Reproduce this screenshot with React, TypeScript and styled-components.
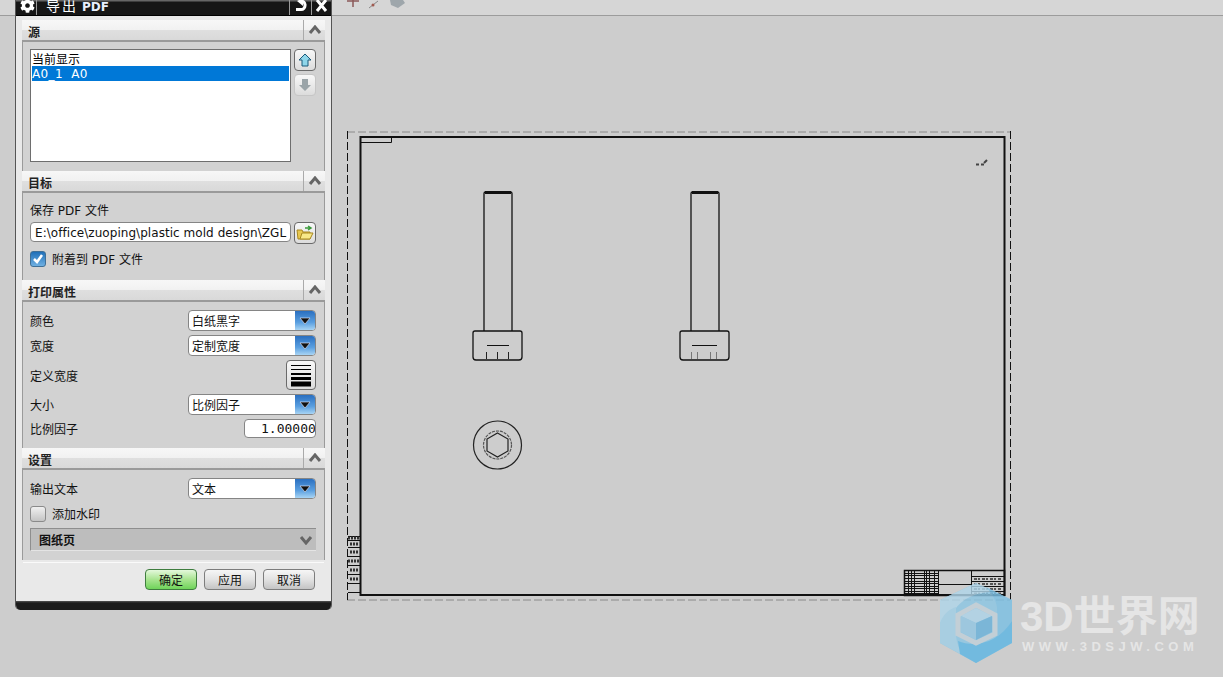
import React from 'react'
import styled, { createGlobalStyle } from 'styled-components'
import { FaCog } from 'react-icons/fa'

const GlobalStyle = createGlobalStyle`
  html, body {
    margin: 0;
    height: 100%;
    overflow: hidden;
    background: #cdcdcd;
  }
  * {
    box-sizing: border-box;
  }
`

const CJK = `"DejaVu Sans", "Noto Sans CJK SC", sans-serif`

const Page = styled.div`
  position: relative;
  width: 1223px;
  height: 677px;
  overflow: hidden;
  font-family: ${CJK};
  font-size: 12px;
  color: #111;
`

const Toolbar = styled.div`
  display: flex;
  align-items: flex-start;
  height: 16px;
  padding-left: 344px;
  background: #d6d6d6;
  border-bottom: 1px solid #9c9c9c;
`

const Canvas = styled.svg`
  display: block;
  width: 1223px;
  height: 661px;
`

const Dialog = styled.div`
  position: absolute;
  left: 15px;
  top: 0;
  width: 317px;
  height: 610px;
  display: flex;
  flex-direction: column;
  background: #e9e9e9;
  border-left: 1px solid #555;
  border-right: 1px solid #555;
  border-radius: 0 0 5px 5px;
  overflow: hidden;
`

const TitleBar = styled.div`
  display: flex;
  flex: none;
  align-items: stretch;
  height: 16px;
  background: linear-gradient(#666 0, #666 1px, #161616 2px);
  border-bottom: 1px solid #000;
  color: #fff;
`

const TitleCell = styled.div<{ $w: number }>`
  display: flex;
  flex: none;
  align-items: flex-start;
  justify-content: center;
  width: ${(p) => p.$w}px;
  border-left: 1px solid #9a9a9a;
  &:first-child {
    border-left: 0;
    border-right: 1px solid #9a9a9a;
    margin-left: 3px;
    width: 18px;
  }
`

const Gear = styled(FaCog)`
  margin-top: -2px;
`

const TitleText = styled.div`
  flex: 1;
  padding-left: 9px;
  font-size: 14px;
  line-height: 13px;
  height: 15px;
  letter-spacing: 2px;
  overflow: hidden;
  white-space: nowrap;
  span {
    font-size: 12px;
    font-weight: 700;
    letter-spacing: 0;
    color: #e8eefc;
    margin-left: 4px;
  }
`

const Sections = styled.div`
  flex: none;
  margin: 4px 6px 0;
  height: 540px;
`

const SectionHead = styled.div`
  display: flex;
  align-items: stretch;
  height: 22px;
  background: linear-gradient(#f7f7f7 0, #f1f1f1 50%, #dfdfdf 52%, #d9d9d9 100%);
  border-bottom: 2px solid #9a9a9a;
`

const SectionTitle = styled.div`
  flex: 1;
  padding: 5px 0 0 6px;
  font-size: 12px;
  line-height: 16px;
  font-weight: 700;
  color: #222;
`

const Toggle = styled.div`
  display: flex;
  width: 22px;
  align-items: center;
  justify-content: center;
  border-left: 1px solid #aaa;
`

const SectionBody = styled.div<{ $h: number; $gap: number }>`
  display: flex;
  flex-direction: column;
  gap: ${(p) => p.$gap}px;
  height: ${(p) => p.$h}px;
  padding: 8px 8px 0 7px;
  background: #d2d2d2;
  border-left: 1px solid #9a9a9a;
  border-right: 1px solid #9a9a9a;
`

const ListRow = styled.div`
  display: flex;
  gap: 3px;
  margin-top: -1px;
`

const ListBox = styled.div`
  width: 261px;
  height: 113px;
  padding: 1px;
  background: #fff;
  border: 1px solid #6e6e6e;
`

const ListItem = styled.div<{ $on?: boolean }>`
  height: 15px;
  line-height: ${(p) => (p.$on ? 17 : 19)}px;
  letter-spacing: ${(p) => (p.$on ? 0.35 : 0)}px;
  white-space: pre;
  background: ${(p) => (p.$on ? '#0078d7' : 'transparent')};
  color: ${(p) => (p.$on ? '#fff' : '#000')};
`

const SideButtons = styled.div`
  display: flex;
  flex-direction: column;
  gap: 3px;
`

const IconButton = styled.div<{ $w?: number; $h?: number; $off?: boolean }>`
  display: flex;
  align-items: center;
  justify-content: center;
  width: ${(p) => p.$w ?? 22}px;
  height: ${(p) => p.$h ?? 22}px;
  background: linear-gradient(#f8f8f8, #dcdcdc);
  border: 1px solid ${(p) => (p.$off ? '#c6c6c6' : '#6a6a6a')};
  border-radius: 4px;
`

const FieldLabel = styled.div`
  height: 16px;
  margin-top: 1px;
  line-height: 18px;
`

const PathRow = styled.div`
  display: flex;
  gap: 3px;
`

const PathInput = styled.div`
  width: 261px;
  height: 20px;
  padding-left: 4px;
  line-height: 20px;
  letter-spacing: 0.05px;
  background: #fff;
  border: 1px solid #858585;
  border-radius: 4px;
  white-space: nowrap;
  overflow: hidden;
`

const CheckRow = styled.div<{ $top?: number }>`
  display: flex;
  align-items: center;
  gap: 6px;
  height: 16px;
  margin-top: ${(p) => p.$top ?? 0}px;
`

const CheckLabel = styled.span`
  margin-bottom: 2px;
`

const CheckBox = styled.div<{ $on?: boolean }>`
  display: flex;
  align-items: center;
  justify-content: center;
  width: 16px;
  height: 16px;
  border: 1px solid ${(p) => (p.$on ? '#3f6f96' : '#8a8a8a')};
  border-radius: 3px;
  background: ${(p) =>
    p.$on
      ? 'linear-gradient(#1f6fb8, #6fb0e2)'
      : 'linear-gradient(#f0f0f0, #c4c4c4)'};
`

const FormRow = styled.div<{ $h: number }>`
  display: flex;
  align-items: center;
  justify-content: space-between;
  height: ${(p) => p.$h}px;
`

const SelectBox = styled.div`
  display: flex;
  width: 128px;
  height: 21px;
  background: #fff;
  border: 1px solid #858585;
  border-radius: 4px;
  overflow: hidden;
`

const SelectValue = styled.div`
  flex: 1;
  padding-left: 3px;
  line-height: 22px;
`

const SelectArrow = styled.div`
  display: flex;
  width: 20px;
  align-items: center;
  justify-content: center;
  background: linear-gradient(#2a6fc0, #5a9fe0 60%, #a8d4f4);
`

const NumberInput = styled.div`
  width: 72px;
  height: 19px;
  padding-left: 16px;
  overflow: hidden;
  background: #fff;
  border: 1px solid #858585;
  border-radius: 4px;
  font-family: "DejaVu Sans Mono", monospace;
  font-size: 13px;
  line-height: 18px;
  white-space: nowrap;
`

const Drawer = styled.div`
  display: flex;
  align-items: center;
  justify-content: space-between;
  height: 23px;
  margin-top: -1px;
  padding: 0 3px 0 8px;
  background: #bdbdbd;
  border-top: 1px solid #8e8e8e;
  border-left: 1px solid #8e8e8e;
  border-bottom: 1px solid #e4e4e4;
  font-weight: 700;
  font-size: 12px;
`

const SectionFoot = styled.div`
  height: 3px;
  margin: 0 1px;
  border-bottom: 1px solid #fafafa;
`

const Footer = styled.div`
  display: flex;
  flex: none;
  justify-content: flex-end;
  gap: 7px;
  height: 21px;
  margin-top: 9px;
  padding-right: 16px;
`

const ActionButton = styled.div<{ $primary?: boolean }>`
  display: flex;
  width: 52px;
  align-items: center;
  justify-content: center;
  border: 1px solid ${(p) => (p.$primary ? '#3f7d3f' : '#7d7d7d')};
  border-radius: 4px;
  background: ${(p) =>
    p.$primary
      ? 'linear-gradient(#e4f8dc, #a8e490 50%, #6fd45a)'
      : 'linear-gradient(#f6f6f6, #e2e2e2 50%, #c4c4c4)'};
`

const BottomBar = styled.div`
  flex: none;
  height: 9px;
  margin-top: 11px;
  background: linear-gradient(#555 0, #1c1c1c 2px, #1c1c1c);
`

const Watermark = styled.div`
  position: absolute;
  left: 940px;
  top: 583px;
  display: flex;
  gap: 8px;
`

const MarkLogo = styled.svg`
  opacity: 0.82;
`

const MarkText = styled.div`
  display: flex;
  flex-direction: column;
  padding-top: 12px;
  color: #e5e5e5;
  font-family: "Liberation Sans", "Noto Sans CJK SC", sans-serif;
`

const MarkTitle = styled.div`
  height: 44px;
  font-size: 42px;
  line-height: 44px;
  font-weight: 700;
  white-space: nowrap;
`

const MarkUrl = styled.div`
  padding-left: 2px;
  font-size: 13px;
  line-height: 16px;
  font-weight: 700;
  letter-spacing: 4.5px;
  white-space: nowrap;
`

const Chevron = ({ down }: { down?: boolean }) => (
  <svg width="14" height="10" viewBox="0 0 14 10">
    <polyline
      points={down ? '2,2 7,8 12,2' : '2,8 7,2 12,8'}
      fill="none"
      stroke="#666"
      strokeWidth="3"
    />
  </svg>
)

const DropArrow = () => (
  <svg width="12" height="8" viewBox="0 0 12 8">
    <polygon points="1,1 11,1 6,7" fill="#111" stroke="#eef" strokeWidth="0.6" />
  </svg>
)

const Section = ({
  title,
  h,
  gap = 4,
  children,
}: {
  title: string
  h: number
  gap?: number
  children: React.ReactNode
}) => (
  <>
    <SectionHead>
      <SectionTitle>{title}</SectionTitle>
      <Toggle>
        <Chevron />
      </Toggle>
    </SectionHead>
    <SectionBody $h={h} $gap={gap}>
      {children}
    </SectionBody>
  </>
)

const Select = ({ value }: { value: string }) => (
  <SelectBox>
    <SelectValue>{value}</SelectValue>
    <SelectArrow>
      <DropArrow />
    </SelectArrow>
  </SelectBox>
)

const Bolt = ({
  x,
  ticks,
  tickColor,
  line,
}: {
  x: number
  ticks: number[]
  tickColor: string
  line: [number, number]
}) => (
  <g fill="none" stroke="#111" strokeWidth="1.3">
    <path d={`M${x} 331V193.5q0-1.5 1.5-1.5h25q1.500 0 1.500 1.500V331`} />
    <path d={`M${x + 1} 192.500h26`} strokeWidth="3" />
    <path
      d={`M${x - 11} 333q0-2 2-2h45q2 0 2 2v24q0 3-3 3h-43q-3 0-3-3z`}
    />
    <path d={`M${line[0]} 345.500H${line[1]}`} strokeWidth="1" />
    {ticks.map((t) => (
      <path
        key={t}
        d={`M${t} 352v7`}
        stroke={tickColor}
        strokeWidth="1"
      />
    ))}
  </g>
)

const titleRows = [573, 575, 578, 581, 583, 586, 588, 591, 593]
const titleCols = [908, 911, 914, 924, 926, 929, 934]
const sideRows = [536, 540, 547, 556, 565, 574, 583, 592]

const Drawing = () => (
  <Canvas viewBox="0 16 1223 661">
    <g fill="none" stroke="#111">
      <path
        d="M347 132H1010M347 600H1010"
        stroke="#8a8a8a"
        strokeDasharray="8 3"
      />
      <path d="M347.500 131V600M1010.500 131V600" strokeDasharray="8 3" />
      <rect x="360.500" y="137" width="644" height="458" strokeWidth="2" />
      <path d="M361 142.500H391.500V137" strokeWidth="1" />
      <path
        d="M976 164.500h3M981 164.500h3M984 163l2-2M986 161l1-1"
        strokeWidth="2"
        stroke="#444"
      />
    </g>
    <Bolt x={484} ticks={[486.5, 497.5, 508.5]} tickColor="#222" line={[487, 509]} />
    <Bolt x={691} ticks={[691.5, 697.5, 710.5, 716.5]} tickColor="#777" line={[692, 717]} />
    <g fill="none" stroke="#222" strokeWidth="1.2">
      <circle cx="497.500" cy="445" r="24" />
      <circle cx="497.500" cy="445" r="14" strokeDasharray="3 1" stroke="#555" />
      <polygon points="497.500,433 508,439 508,451 497.500,457 487,451 487,439" />
    </g>
    <g fill="none" stroke="#111" strokeWidth="1">
      <rect x="904.500" y="570.500" width="100" height="25" strokeWidth="1.500" />
      <path d="M938.500 570V595M971.500 570V595M939 584.500H971" />
      {titleRows.map((y) => (
        <path key={y} d={`M905 ${y + 0.5}H938`} />
      ))}
      {titleCols.map((x) => (
        <path key={x} d={`M${x + 0.5} 570V595`} />
      ))}
      <path d="M972 576.500H1004M972 581.500H1004M972 586.500H1004M972 591.500H1004" />
      <path
        d="M974 579h28M974 584h28M974 589h28M974 593.500h28"
        stroke="#555"
        strokeWidth="2"
        strokeDasharray="3 1 2 2"
      />
      {sideRows.map((y) => (
        <path key={y} d={`M348 ${y + 0.5}H360`} />
      ))}
      <path
        d="M348 538h12M350 544h8M350 552h8M348 561h12M350 570h8M350 579h8"
        stroke="#333"
        strokeWidth="3"
        strokeDasharray="2 1"
      />
    </g>
  </Canvas>
)

export default function App() {
  return (
    <Page>
      <GlobalStyle />
      <Toolbar>
        <svg width="70" height="15" viewBox="0 0 70 15">
          <path d="M9 0v7M3 1h12" stroke="#8c5a5a" strokeWidth="1.500" fill="none" />
          <path d="M25 8L34 1" stroke="#888" fill="none" />
          <circle cx="29" cy="5" r="1.500" fill="#a05a50" />
          <polygon points="46,0 59,0 61,3 54,8 47,5" fill="#9ea6ab" />
        </svg>
      </Toolbar>
      <Drawing />
      <Watermark>
        <MarkLogo width="72" height="80" viewBox="0 0 72 80">
          <polygon points="36,0 72,17 72,60 36,80 0,60 0,17" fill="#8cc6e4" />
          <path d="M0 17L36 0 56 9C40 8 22 14 14 28L0 40z" fill="#b0d6ea" />
          <path d="M0 40C4 30 10 26 16 24V50C16 60 20 68 24 73L0 60z" fill="#a0cfe6" />
          <path d="M46 4L72 17V38C68 46 62 50 56 54L57 28C58 20 52 10 46 4z" fill="#7cc0e4" />
          <path d="M18 58C35 65 58 60 72 38V60L36 80 20 71z" fill="#5fb7e3" />
          <polygon points="36,22 55,32 55,51 36,60 18,51 18,32" fill="none" stroke="#c2d0d8" strokeWidth="5" />
          <polygon points="36,25 52,33 36,40 21,33" fill="#aed4e9" />
          <polygon points="21,33 36,40 36,57 21,49" fill="#93c6e2" />
          <polygon points="52,33 36,40 36,57 52,49" fill="#6ab2da" />
        </MarkLogo>
        <MarkText>
          <MarkTitle>3D世界网</MarkTitle>
          <MarkUrl>WWW.3DSJW.COM</MarkUrl>
        </MarkText>
      </Watermark>
      <Dialog>
        <TitleBar>
          <TitleCell $w={18}>
            <Gear size={15} />
          </TitleCell>
          <TitleText>
            导出<span>PDF</span>
          </TitleText>
          <TitleCell $w={22}>
            <svg width="14" height="13" viewBox="0 0 14 13">
              <path d="M2 9.500h5a4 4 0 0 0 4-4.500 4 4 0 0 0-4-4" fill="none" stroke="#fff" strokeWidth="3" />
              <polygon points="9,-2 3,1 9,6" fill="#fff" />
            </svg>
          </TitleCell>
          <TitleCell $w={20}>
            <svg width="13" height="13" viewBox="0 0 13 13">
              <path d="M2 0l9 11M11 0L2 11" stroke="#fff" strokeWidth="3" />
            </svg>
          </TitleCell>
        </TitleBar>
        <Sections>
          <Section title="源" h={129}>
            <ListRow>
              <ListBox>
                <ListItem>当前显示</ListItem>
                <ListItem $on>A0_1  A0</ListItem>
              </ListBox>
              <SideButtons>
                <IconButton>
                  <svg width="14" height="14" viewBox="0 0 14 14">
                    <polygon
                      points="7,1 13,7 10,7 10,13 4,13 4,7 1,7"
                      fill="#8fd6ea"
                      stroke="#1a5a7a"
                    />
                  </svg>
                </IconButton>
                <IconButton $off>
                  <svg width="14" height="14" viewBox="0 0 14 14">
                    <polygon points="4,1 10,1 10,7 13,7 7,13 1,7 4,7" fill="#9aa4a8" />
                  </svg>
                </IconButton>
              </SideButtons>
            </ListRow>
          </Section>
          <Section title="目标" h={87}>
            <FieldLabel>保存 PDF 文件</FieldLabel>
            <PathRow>
              <PathInput>E:\office\zuoping\plastic mold design\ZGL</PathInput>
              <IconButton>
                <svg width="18" height="16" viewBox="0 0 18 16">
                  <path d="M1 5h5l1 2h7v7H2z" fill="#e8c850" stroke="#a88820" />
                  <path d="M4 14l2-6h11l-3 6z" fill="#f8e888" stroke="#a88820" />
                  <path d="M9 3h5M12 1l3 2-3 2" fill="none" stroke="#3a9a3a" strokeWidth="1.500" />
                </svg>
              </IconButton>
            </PathRow>
            <CheckRow $top={3}>
              <CheckBox $on>
                <svg width="12" height="12" viewBox="0 0 12 12">
                  <path d="M2 6l3 3 5-7" fill="none" stroke="#fff" strokeWidth="2.500" />
                </svg>
              </CheckBox>
              <CheckLabel>附着到 PDF 文件</CheckLabel>
            </CheckRow>
          </Section>
          <Section title="打印属性" h={146}>
            <FormRow $h={21}>
              颜色
              <Select value="白纸黑字" />
            </FormRow>
            <FormRow $h={21}>
              宽度
              <Select value="定制宽度" />
            </FormRow>
            <FormRow $h={30}>
              定义宽度
              <IconButton $w={30} $h={30}>
                <svg width="22" height="24" viewBox="0 0 22 24">
                  <path d="M1 2.500h20M1 6.500h20" stroke="#000" fill="none" />
                  <path d="M1 11h20" stroke="#000" strokeWidth="2" />
                  <path d="M1 15.500h20" stroke="#000" strokeWidth="3" />
                  <path d="M1 21h20" stroke="#000" strokeWidth="5" />
                </svg>
              </IconButton>
            </FormRow>
            <FormRow $h={21}>
              大小
              <Select value="比例因子" />
            </FormRow>
            <FormRow $h={19}>
              比例因子
              <NumberInput>1.00000</NumberInput>
            </FormRow>
          </Section>
          <Section title="设置" h={90} gap={7}>
            <FormRow $h={21}>
              输出文本
              <Select value="文本" />
            </FormRow>
            <CheckRow>
              <CheckBox />
              <CheckLabel>添加水印</CheckLabel>
            </CheckRow>
            <Drawer>
              图纸页
              <Chevron down />
            </Drawer>
          </Section>
          <SectionFoot />
        </Sections>
        <Footer>
          <ActionButton $primary>确定</ActionButton>
          <ActionButton>应用</ActionButton>
          <ActionButton>取消</ActionButton>
        </Footer>
        <BottomBar />
      </Dialog>
    </Page>
  )
}
